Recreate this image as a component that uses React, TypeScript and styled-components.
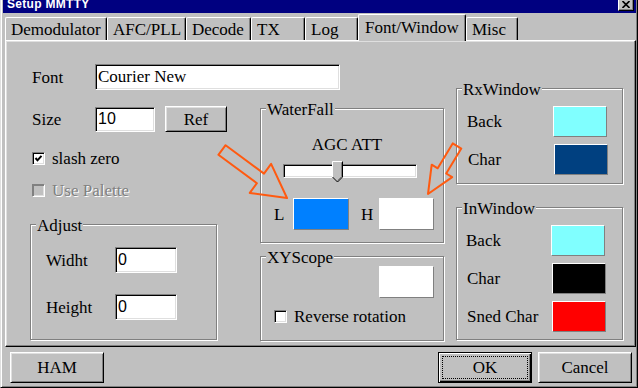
import styled, { createGlobalStyle } from "styled-components";

const GlobalStyle = createGlobalStyle`
  html, body { margin: 0; padding: 0; background: #c0c0c0; }
  body {
    width: 638px;
    height: 388px;
    overflow: hidden;
    font-family: "Liberation Serif", "Times New Roman", serif;
    font-size: 17px;
    color: #000;
  }
  * { box-sizing: border-box; }
`;

const Window = styled.div`
  position: relative;
  width: 638px;
  height: 388px;
  background: #c0c0c0;
  border-left: 1px solid #dfdfdf;
  border-right: 1px solid #000;
  border-bottom: 1px solid #000;
  box-shadow: inset 1px 0 #fff, inset -1px -1px #808080;
  padding: 0 1px 0 2px;
  display: flex;
  flex-direction: column;
`;

const TitleBar = styled.div`
  height: 13px;
  background: #000080;
  display: flex;
  align-items: flex-start;
  overflow: hidden;
  flex-shrink: 0;
`;

const TitleText = styled.span`
  margin: -3px 0 0 4px;
  font: bold 12px/14px "Liberation Sans", Arial, sans-serif;
  color: #fff;
  letter-spacing: 0.3px;
`;

const CloseButton = styled.div`
  margin: -3px 2px 0 auto;
  width: 16px;
  height: 14px;
  background: #c0c0c0;
  border-top: 1px solid #fff;
  border-left: 1px solid #fff;
  border-right: 1px solid #000;
  border-bottom: 1px solid #000;
  box-shadow: inset -1px -1px #808080;
  display: flex;
  align-items: flex-end;
  justify-content: center;
  padding-bottom: 2px;
`;

const TabStrip = styled.div`
  height: 27px;
  display: flex;
  align-items: flex-end;
  padding-left: 2px;
  flex-shrink: 0;
`;

const Tab = styled.div<{ $w: number; $active?: boolean }>`
  position: relative;
  z-index: ${(p) => (p.$active ? 2 : 0)};
  width: ${(p) => p.$w}px;
  height: ${(p) => (p.$active ? 27 : 23)}px;
  margin-bottom: ${(p) => (p.$active ? -1 : 0)}px;
  background: #c0c0c0;
  border-top: 1px solid #fff;
  border-left: 1px solid #fff;
  border-right: 1px solid #000;
  border-top-left-radius: 2px;
  border-top-right-radius: 2px;
  box-shadow: inset -1px 0 #808080;
  padding: ${(p) => (p.$active ? "3px 0 0 6px" : "2px 0 0 5px")};
  line-height: 19px;
  white-space: nowrap;
`;

const Panel = styled.div`
  margin-left: 2px;
  width: 631px;
  height: 307px;
  flex-shrink: 0;
  border-top: 1px solid #fff;
  border-left: 1px solid #fff;
  border-right: 1px solid #000;
  border-bottom: 1px solid #000;
  box-shadow: inset -1px -1px #808080, inset 1px 1px #dfdfdf;
  display: flex;
  align-items: flex-start;
  padding-left: 24px;
`;

const Column = styled.div<{ $w: number; $top: number; $left?: number }>`
  width: ${(p) => p.$w}px;
  margin-top: ${(p) => p.$top}px;
  margin-left: ${(p) => p.$left || 0}px;
  display: flex;
  flex-direction: column;
  flex-shrink: 0;
`;

const Row = styled.div<{ $top?: number; $pl?: number }>`
  display: flex;
  align-items: center;
  margin-top: ${(p) => p.$top || 0}px;
  padding-left: ${(p) => p.$pl || 0}px;
  line-height: 19px;
  white-space: nowrap;
`;

const Label = styled.span<{ $w: number; $pl?: number; $ml?: number }>`
  width: ${(p) => p.$w}px;
  padding-left: ${(p) => p.$pl || 0}px;
  margin-left: ${(p) => p.$ml || 0}px;
  flex-shrink: 0;
`;

const TextBox = styled.input<{ $w: number; $h: number; $serif?: boolean }>`
  width: ${(p) => p.$w}px;
  height: ${(p) => p.$h}px;
  flex-shrink: 0;
  margin: 0;
  padding: 0 0 0 2px;
  outline: none;
  background: #fff;
  border-top: 1px solid #808080;
  border-left: 1px solid #808080;
  border-right: 1px solid #fff;
  border-bottom: 1px solid #fff;
  box-shadow: inset 1px 1px #000, inset -1px -1px #dfdfdf;
  color: #000;
  font: ${(p) =>
    p.$serif
      ? `17px "Liberation Serif", "Times New Roman", serif`
      : `16px "Liberation Sans", Arial, sans-serif`};
`;

const Button = styled.div<{ $w: number; $h: number; $default?: boolean; $ml?: number }>`
  position: relative;
  width: ${(p) => p.$w}px;
  height: ${(p) => p.$h}px;
  margin-left: ${(p) => p.$ml || 0}px;
  flex-shrink: 0;
  background: #c0c0c0;
  border: 1px solid #000;
  border-top-color: ${(p) => (p.$default ? "#000" : "#fff")};
  border-left-color: ${(p) => (p.$default ? "#000" : "#fff")};
  box-shadow: ${(p) =>
    p.$default
      ? "inset 1px 1px #fff, inset -1px -1px #000, inset -2px -2px #808080"
      : "inset 1px 1px #dfdfdf, inset -1px -1px #808080"};
  display: flex;
  align-items: center;
  justify-content: center;
  line-height: 19px;
  &::after {
    content: "";
    display: ${(p) => (p.$default ? "block" : "none")};
    position: absolute;
    inset: 3px;
    border: 1px dotted #000;
  }
`;

const Spacer = styled.div`
  flex: 1;
`;

const CheckBox = styled.span<{ $disabled?: boolean }>`
  width: 13px;
  height: 13px;
  flex-shrink: 0;
  margin-right: 7px;
  background: ${(p) => (p.$disabled ? "#c0c0c0" : "#fff")};
  border-top: 1px solid #808080;
  border-left: 1px solid #808080;
  border-right: 1px solid #fff;
  border-bottom: 1px solid #fff;
  box-shadow: inset 1px 1px ${(p) => (p.$disabled ? "#808080" : "#000")},
    inset -1px -1px #dfdfdf;
  display: flex;
  align-items: center;
  justify-content: center;
`;

const Disabled = styled.span`
  color: #808080;
  text-shadow: 1px 1px #fff;
`;

const Group = styled.div<{ $w: number; $h: number; $top?: number }>`
  position: relative;
  width: ${(p) => p.$w}px;
  height: ${(p) => p.$h}px;
  margin-top: ${(p) => p.$top || 0}px;
  flex-shrink: 0;
  border: 1px solid #808080;
  box-shadow: 1px 1px 0 #fff, inset 1px 1px 0 #fff;
  display: flex;
  flex-direction: column;
`;

const Legend = styled.span`
  position: absolute;
  top: -8px;
  left: 5px;
  padding: 0 1px;
  background: #c0c0c0;
  line-height: 17px;
  white-space: nowrap;
`;

const GroupBody = styled.div<{ $pt: number; $gap?: number }>`
  padding-top: ${(p) => p.$pt}px;
  display: flex;
  flex-direction: column;
  gap: ${(p) => p.$gap || 0}px;
`;

const Swatch = styled.div<{ $color: string; $w: number; $h: number; $mt?: number; $ml?: number }>`
  width: ${(p) => p.$w}px;
  height: ${(p) => p.$h}px;
  margin-top: ${(p) => p.$mt || 0}px;
  margin-left: ${(p) => p.$ml || 0}px;
  flex-shrink: 0;
  background: ${(p) => p.$color};
  border-top: 1px solid #fff;
  border-left: 1px solid #fff;
  border-right: 1px solid #808080;
  border-bottom: 1px solid #808080;
`;

const CenterText = styled.div`
  margin-top: 26px;
  padding-right: 10px;
  text-align: center;
  line-height: 19px;
`;

const Track = styled.div`
  position: relative;
  margin: 10px 0 0 22px;
  width: 134px;
  height: 14px;
  background: #fff;
  border-top: 1px solid #808080;
  border-left: 1px solid #808080;
  border-right: 1px solid #fff;
  border-bottom: 1px solid #fff;
  box-shadow: inset 1px 1px #000, inset -1px -1px #dfdfdf;
`;

const Thumb = styled.svg`
  position: absolute;
  left: 48px;
  top: -4px;
`;

const ButtonRow = styled.div`
  margin-top: 5px;
  display: flex;
  padding: 0 4px 0 7px;
`;

const Overlay = styled.svg`
  position: absolute;
  left: -1px;
  top: 0;
  pointer-events: none;
`;

const tabs = [
  { name: "Demodulator", w: 102 },
  { name: "AFC/PLL", w: 79 },
  { name: "Decode", w: 65 },
  { name: "TX", w: 54 },
  { name: "Log", w: 53 },
  { name: "Font/Window", w: 108, active: true },
  { name: "Misc", w: 52 },
];

function Check() {
  return (
    <svg width="9" height="9" viewBox="0 0 9 9">
      <polyline points="1.5,4 3.5,6.3 7.5,1.8" fill="none" stroke="#000" strokeWidth="2" />
    </svg>
  );
}

function ColorRow({ label, color, lw, pl }: { label: string; color: string; lw: number; pl: number }) {
  return (
    <Row $pl={pl}>
      <Label $w={lw}>{label}</Label>
      <Swatch $color={color} $w={54} $h={31} />
    </Row>
  );
}

function arrowPoints(tx: number, ty: number, hx: number, hy: number, shaft: number, head: number, headLen: number) {
  const len = Math.hypot(hx - tx, hy - ty);
  const dx = (hx - tx) / len;
  const dy = (hy - ty) / len;
  const px = -dy;
  const py = dx;
  const bx = hx - dx * headLen;
  const by = hy - dy * headLen;
  const pts = [
    [tx + px * shaft, ty + py * shaft],
    [bx + px * shaft, by + py * shaft],
    [bx + px * head, by + py * head],
    [hx, hy],
    [bx - px * head, by - py * head],
    [bx - px * shaft, by - py * shaft],
    [tx - px * shaft, ty - py * shaft],
  ];
  return pts.map((p) => p.map((v) => v.toFixed(1)).join(",")).join(" ");
}

export default function App() {
  return (
    <>
      <GlobalStyle />
      <Window>
        <TitleBar>
          <TitleText>Setup MMTTY</TitleText>
          <CloseButton>
            <svg width="8" height="7" viewBox="0 0 8 7">
              <path d="M0.5 0 L7.5 7 M7.5 0 L0.5 7" stroke="#000" strokeWidth="1.6" />
            </svg>
          </CloseButton>
        </TitleBar>

        <TabStrip>
          {tabs.map((t) => (
            <Tab key={t.name} $w={t.w} $active={t.active}>
              {t.name}
            </Tab>
          ))}
        </TabStrip>

        <Panel>
          <Column $w={230} $top={23}>
            <Row>
              <Label $w={65} $pl={2}>Font</Label>
              <TextBox $w={245} $h={26} $serif readOnly value="Courier New" />
            </Row>
            <Row $top={16}>
              <Label $w={65} $pl={2}>Size</Label>
              <TextBox $w={60} $h={25} readOnly value="10" />
              <Button $w={62} $h={26} $ml={10}>Ref</Button>
            </Row>
            <Row $top={17} $pl={2}>
              <CheckBox>
                <Check />
              </CheckBox>
              slash zero
            </Row>
            <Row $top={13} $pl={2}>
              <CheckBox $disabled />
              <Disabled>Use Palette</Disabled>
            </Row>
            <Group $w={187} $h={116} $top={24}>
              <Legend>Adjust</Legend>
              <GroupBody $pt={22} $gap={21}>
                <Row $pl={15}>
                  <Label $w={69}>Widht</Label>
                  <TextBox $w={62} $h={26} readOnly value="0" />
                </Row>
                <Row $pl={15}>
                  <Label $w={69}>Height</Label>
                  <TextBox $w={62} $h={26} readOnly value="0" />
                </Row>
              </GroupBody>
            </Group>
          </Column>

          <Column $w={184} $top={67}>
            <Group $w={184} $h={135}>
              <Legend>WaterFall</Legend>
              <CenterText>AGC ATT</CenterText>
              <Track>
                <Thumb width="12" height="22" viewBox="0 0 12 22">
                  <polygon points="0.5,0.5 10.5,0.5 10.5,16 5.5,21 0.5,16" fill="#c0c0c0" />
                  <polyline points="0.5,16 0.5,0.5 10.5,0.5" fill="none" stroke="#fff" />
                  <polyline points="10.5,0.5 10.5,16 5.5,21 0.5,16" fill="none" stroke="#000" />
                  <polyline points="9.5,1.5 9.5,15.5 5.5,19.5" fill="none" stroke="#808080" />
                </Thumb>
              </Track>
              <Row $top={20} $pl={13}>
                <Label $w={19}>L</Label>
                <Swatch $color="#0080ff" $w={56} $h={32} />
                <Label $w={18} $ml={12}>H</Label>
                <Swatch $color="#ffffff" $w={55} $h={32} />
              </Row>
            </Group>
            <Group $w={184} $h={85} $top={13}>
              <Legend>XYScope</Legend>
              <Swatch $color="#ffffff" $w={55} $h={32} $mt={9} $ml={118} />
              <Row $top={9} $pl={13}>
                <CheckBox />
                Reverse rotation
              </Row>
            </Group>
          </Column>

          <Column $w={168} $top={47} $left={12}>
            <Group $w={167} $h={96}>
              <Legend>RxWindow</Legend>
              <GroupBody $pt={17} $gap={7}>
                <ColorRow label="Back" color="#80ffff" lw={86} pl={10} />
                <ColorRow label="Char" color="#004080" lw={86} pl={11} />
              </GroupBody>
            </Group>
            <Group $w={167} $h={133} $top={23}>
              <Legend>InWindow</Legend>
              <GroupBody $pt={17} $gap={7}>
                <ColorRow label="Back" color="#80ffff" lw={85} pl={9} />
                <ColorRow label="Char" color="#000000" lw={85} pl={10} />
                <ColorRow label="Sned Char" color="#ff0000" lw={85} pl={10} />
              </GroupBody>
            </Group>
          </Column>
        </Panel>

        <ButtonRow>
          <Button $w={94} $h={31}>HAM</Button>
          <Spacer />
          <Button $w={94} $h={31} $default>OK</Button>
          <Button $w={94} $h={31} $ml={6}>Cancel</Button>
        </ButtonRow>

        <Overlay width="638" height="388" viewBox="0 0 638 388">
          <polygon
            points={arrowPoints(222, 150, 287, 198, 6, 18, 33)}
            fill="none"
            stroke="#ff5a10"
            strokeWidth="2"
            strokeLinejoin="round"
          />
          <polygon
            points={arrowPoints(457, 146, 428, 194, 5, 12, 27)}
            fill="none"
            stroke="#ff5a10"
            strokeWidth="2"
            strokeLinejoin="round"
          />
        </Overlay>
      </Window>
    </>
  );
}
